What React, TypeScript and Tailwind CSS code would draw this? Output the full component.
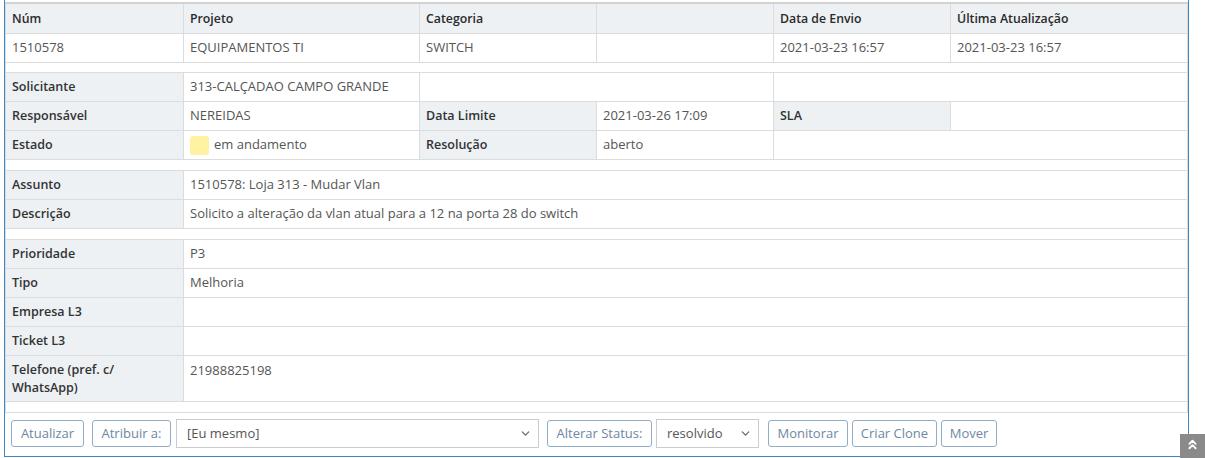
import { ChevronDown, ChevronsUp } from "lucide-react";

const lbl = "bg-[#edf1f4] font-semibold text-[12.5px] text-[#333] border border-[#dcdcdc] px-[6px] pt-[2px] h-[29px] align-middle";
const head = "bg-[#edf1f4] font-semibold text-[12.3px] text-[#2a2a2a] border border-[#dcdcdc] border-t-2 border-t-[#d2d2d2] px-[6px] pt-[2px] h-[30px] align-middle";
const val = "bg-white text-[#555] border border-[#dcdcdc] px-[6px] pt-[1px] h-[29px] align-middle";

function Spacer({ h }: { h: string }) {
  return (
    <tr>
      <td colSpan={6} className={`border border-[#dcdcdc] p-0 ${h}`}></td>
    </tr>
  );
}

function Btn({ children, className = "" }: { children: React.ReactNode; className?: string }) {
  return (
    <button
      className={`h-[27px] shrink-0 rounded-[3px] border border-[#8fadc8] bg-white text-[#6d87a1] text-[13px] leading-none text-center ${className}`}
    >
      {children}
    </button>
  );
}

function FakeSelect({ text, className = "" }: { text: string; className?: string }) {
  return (
    <div
      className={`h-[29px] shrink-0 border border-[#ccc] bg-white flex items-center justify-between pl-[10px] pr-[6px] text-[#555] text-[13px] ${className}`}
    >
      <span className="pt-[2px]">{text}</span>
      <ChevronDown size={13} strokeWidth={2.2} className="text-[#666]" />
    </div>
  );
}

export default function App() {
  return (
    <div className="relative w-[1205px] h-[458px] bg-white overflow-hidden font-['Open_Sans',sans-serif] text-[13px]">
      <div className="ml-[4px] w-[1185px] border-l border-r border-b border-[#3b87c7] pt-[2px]">
        <table className="w-full table-fixed border-collapse">
          <colgroup>
            <col className="w-[178px]" />
            <col className="w-[236px]" />
            <col className="w-[177px]" />
            <col className="w-[177px]" />
            <col className="w-[177px]" />
            <col />
          </colgroup>
          <tbody>
            <tr>
              <td className={head}>Núm</td>
              <td className={head}>Projeto</td>
              <td className={head}>Categoria</td>
              <td className={head}></td>
              <td className={head}>Data de Envio</td>
              <td className={head}>Última Atualização</td>
            </tr>
            <tr>
              <td className={val}>1510578</td>
              <td className={val}>EQUIPAMENTOS TI</td>
              <td className={val}>SWITCH</td>
              <td className={val}></td>
              <td className={val}>2021-03-23 16:57</td>
              <td className={val}>2021-03-23 16:57</td>
            </tr>
            <Spacer h="h-[10px]" />
            <tr>
              <td className={lbl}>Solicitante</td>
              <td className={val}>313-CALÇADAO CAMPO GRANDE</td>
              <td className={val} colSpan={2}></td>
              <td className={val} colSpan={2}></td>
            </tr>
            <tr>
              <td className={lbl}>Responsável</td>
              <td className={val}>NEREIDAS</td>
              <td className={lbl}>Data Limite</td>
              <td className={val}>2021-03-26 17:09</td>
              <td className={lbl}>SLA</td>
              <td className={val}></td>
            </tr>
            <tr>
              <td className={lbl}>Estado</td>
              <td className={val}>
                <div className="flex items-center gap-[5px]">
                  <span className="inline-block w-[19px] h-[19px] rounded-[3px] bg-[#fff3a3]"></span>
                  <span>em andamento</span>
                </div>
              </td>
              <td className={lbl}>Resolução</td>
              <td className={val}>aberto</td>
              <td className={val} colSpan={2}></td>
            </tr>
            <Spacer h="h-[11px]" />
            <tr>
              <td className={lbl}>Assunto</td>
              <td className={val} colSpan={5}>1510578: Loja 313 - Mudar Vlan</td>
            </tr>
            <tr>
              <td className={lbl}>Descrição</td>
              <td className={val} colSpan={5}>Solicito a alteração da vlan atual para a 12 na porta 28 do switch</td>
            </tr>
            <Spacer h="h-[11px]" />
            <tr>
              <td className={lbl}>Prioridade</td>
              <td className={val} colSpan={5}>P3</td>
            </tr>
            <tr>
              <td className={lbl}>Tipo</td>
              <td className={val} colSpan={5}>Melhoria</td>
            </tr>
            <tr>
              <td className={lbl}>Empresa L3</td>
              <td className={val} colSpan={5}></td>
            </tr>
            <tr>
              <td className={lbl}>Ticket L3</td>
              <td className={val} colSpan={5}></td>
            </tr>
            <tr>
              <td className={`${lbl} h-[46px] align-top pt-[5px] leading-[18px]`}>Telefone (pref. c/ WhatsApp)</td>
              <td className={`${val} h-[46px] align-top pt-[5px] leading-[18px]`} colSpan={5}>21988825198</td>
            </tr>
            <Spacer h="h-[11px]" />
          </tbody>
        </table>
        <div className="flex items-center pl-[6px] pt-[6px] pb-[8px]">
          <Btn className="w-[73px]">Atualizar</Btn>
          <Btn className="w-[79px] ml-[8px]">Atribuir a:</Btn>
          <FakeSelect text="[Eu mesmo]" className="w-[363px] ml-[5px]" />
          <Btn className="w-[105px] ml-[8px]">Alterar Status:</Btn>
          <FakeSelect text="resolvido" className="w-[103px] ml-[4px]" />
          <Btn className="w-[80px] ml-[9px]">Monitorar</Btn>
          <Btn className="w-[85px] ml-[4px]">Criar Clone</Btn>
          <Btn className="w-[56px] ml-[4px]">Mover</Btn>
        </div>
      </div>
      <div className="absolute left-[1180px] top-[434px] w-[25px] h-[24px] bg-[#8a8a8a] flex justify-center pt-[3px]">
        <ChevronsUp size={15} strokeWidth={3} className="text-white" />
      </div>
    </div>
  );
}
